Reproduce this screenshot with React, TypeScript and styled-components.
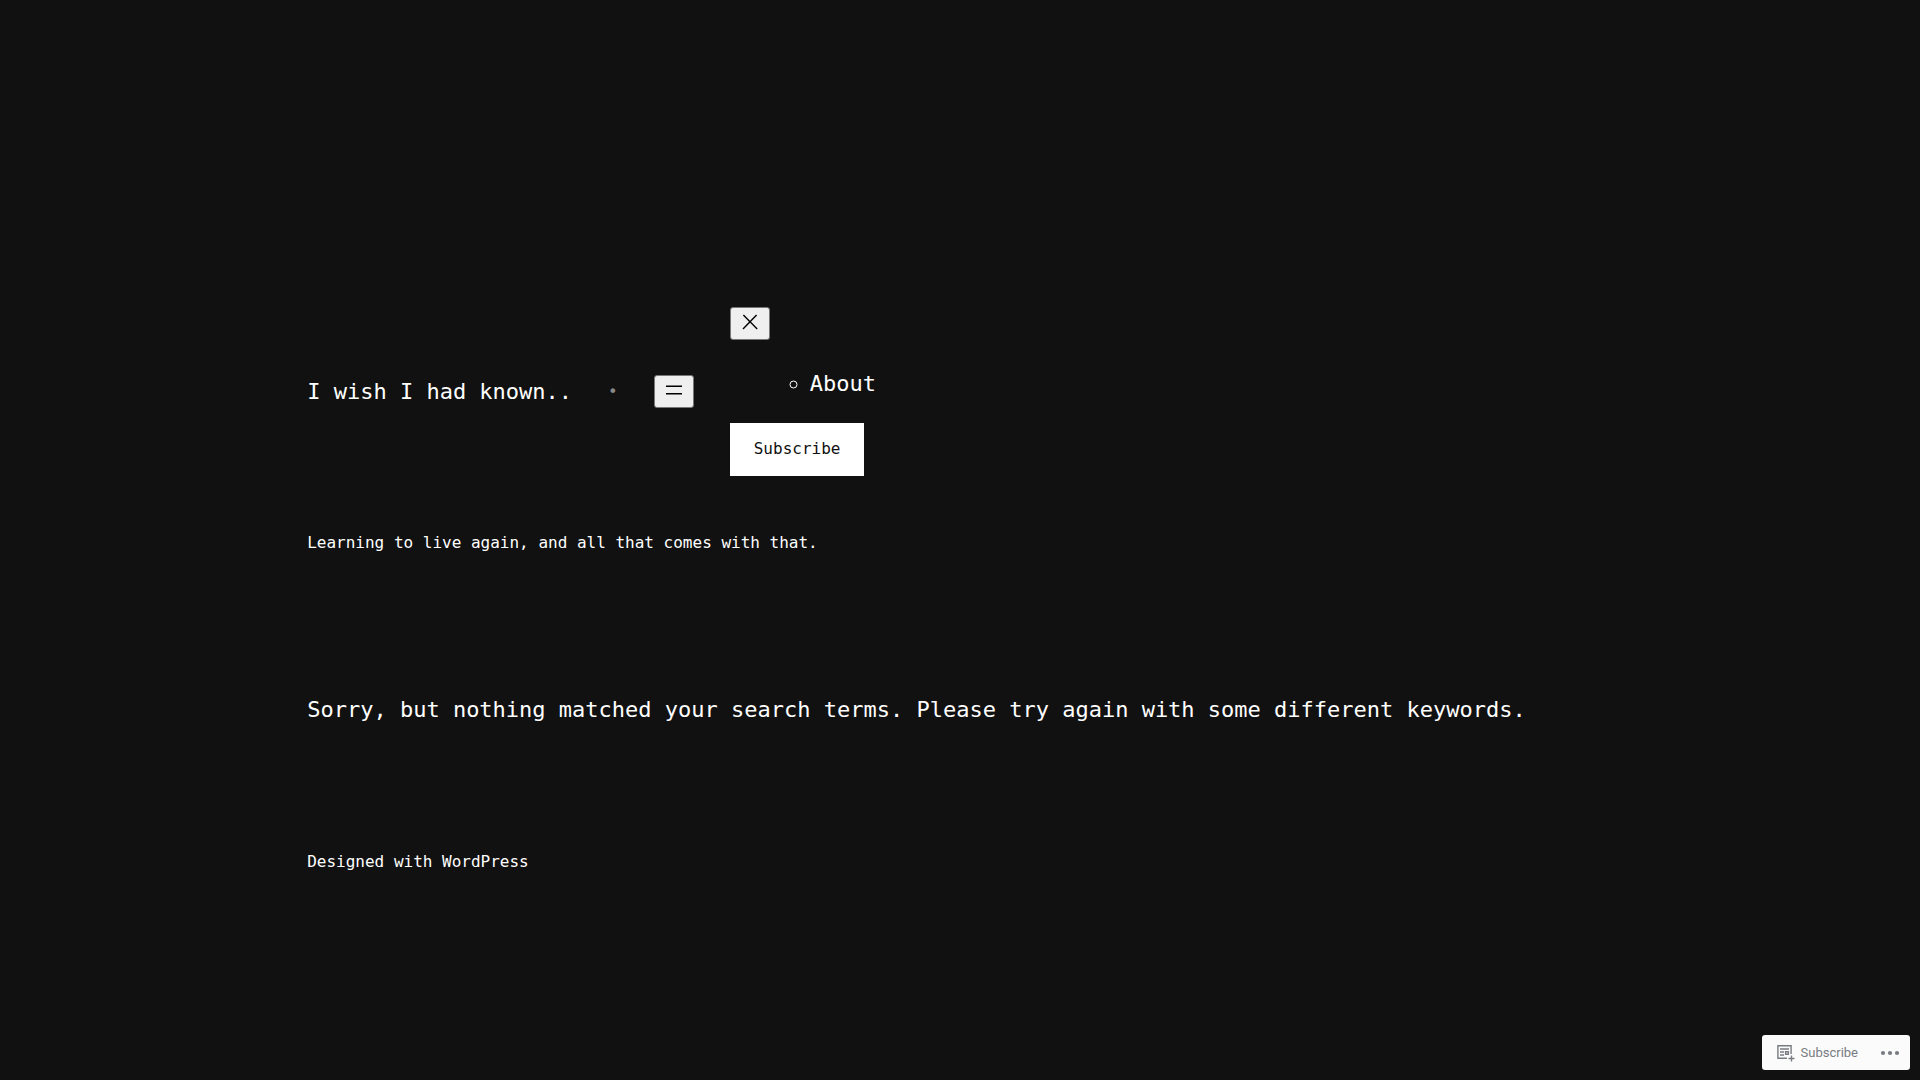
import React from "react";
import styled, { createGlobalStyle } from "styled-components";

const GlobalStyle = createGlobalStyle`
  *, *::before, *::after { box-sizing: border-box; }
  body {
    margin: 0;
    background: #111;
    color: #fff;
    font: 16px/24px "DejaVu Sans Mono", monospace;
  }
  a { color: inherit; text-decoration: none; }
`;

const Page = styled.div`
  padding: 16vw 16vw 80px;
`;

const Header = styled.header`
  display: flex;
  align-items: center;
  gap: 36px;
`;

const SiteTitle = styled.h1`
  margin: 0;
  font-size: 22px;
  line-height: 36px;
  font-weight: 400;
`;

const Separator = styled.span`
  color: #888;
`;

const Nav = styled.nav`
  display: flex;
  align-items: center;
  gap: 36px;
`;

const IconButton = styled.button`
  display: block;
  width: 40px;
  height: 33px;
  padding: 1px 6px 5px;
  border: 1px solid #767676;
  border-radius: 3px;
  background: #efefef;
  color: #000;

  svg {
    display: block;
    margin: 0 auto;
    fill: currentColor;
  }
`;

const MenuPanel = styled.div`
  display: flex;
  flex-direction: column;
  align-items: flex-start;
`;

const MenuList = styled.ul`
  margin: 26px 0 21px;
  padding-left: 80px;
  list-style: circle;
  font-size: 22px;
  line-height: 36px;
`;

const SubscribeLink = styled.a`
  padding: 14px 24px 15px;
  background: #fff;
  color: #111;
`;

const Tagline = styled.p`
  margin: 55px 0 0;
`;

const Message = styled.p`
  margin: 137px 0 122px;
  font-size: 22px;
  line-height: 36px;
`;

const Footer = styled.footer`
  margin: 0;
`;

const ActionBar = styled.aside`
  position: fixed;
  right: 10px;
  bottom: 10px;
  display: flex;
  align-items: center;
  height: 35px;
  padding: 0 8px 0 14px;
  gap: 20px;
  border-radius: 3px;
  background: #fbfbfb;
`;

const BarButton = styled.button`
  display: flex;
  align-items: center;
  gap: 6px;
  padding: 0;
  border: 0;
  background: none;
  color: #787c82;
  font: 13px/20px Roboto, sans-serif;
`;

export default function App() {
  return (
    <>
      <GlobalStyle />
      <Page>
        <Header>
          <SiteTitle>
            <a href="#home">I wish I had known..</a>
          </SiteTitle>
          <Separator>•</Separator>
          <Nav aria-label="Main">
            <IconButton type="button" aria-label="Open menu">
              <svg width="24" height="24" viewBox="0 0 24 24">
                <path d="M4 7.5h16v1.5H4zM4 15h16v1.5H4z" />
              </svg>
            </IconButton>
            <MenuPanel>
              <IconButton type="button" aria-label="Close menu">
                <svg width="24" height="24" viewBox="0 0 24 24">
                  <path d="M13 11.8l6.1-6.3-1-1-6.1 6.2-6.1-6.2-1 1 6.1 6.3-6.5 6.7 1 1 6.6-6.8 6.6 6.8 1-1z" />
                </svg>
              </IconButton>
              <MenuList>
                <li>
                  <a href="#about">About</a>
                </li>
              </MenuList>
              <SubscribeLink href="#subscribe">Subscribe</SubscribeLink>
            </MenuPanel>
          </Nav>
        </Header>
        <Tagline>Learning to live again, and all that comes with that.</Tagline>
        <main>
          <Message>
            Sorry, but nothing matched your search terms. Please try again with some different keywords.
          </Message>
        </main>
        <Footer>
          Designed with <a href="#wordpress">WordPress</a>
        </Footer>
      </Page>
      <ActionBar>
        <BarButton type="button">
          <svg width="19" height="18" viewBox="0 0 19 18" fill="none" stroke="currentColor">
            <path d="M11 14.3H1.9V1.7h13.2V10" strokeWidth="1.4" />
            <path d="M4 5h9M4 8h4M4 11h4" strokeWidth="1.3" />
            <path d="M9.6 7.7h2.8v2.6H9.6zM15.5 11.5v6M12.5 14.5h6" strokeWidth="1.4" />
          </svg>
          Subscribe
        </BarButton>
        <BarButton type="button" aria-label="More options">
          <svg width="24" height="6" viewBox="0 0 24 6" fill="currentColor">
            <circle cx="5" cy="3" r="2.1" />
            <circle cx="12" cy="3" r="2.1" />
            <circle cx="19" cy="3" r="2.1" />
          </svg>
        </BarButton>
      </ActionBar>
    </>
  );
}
